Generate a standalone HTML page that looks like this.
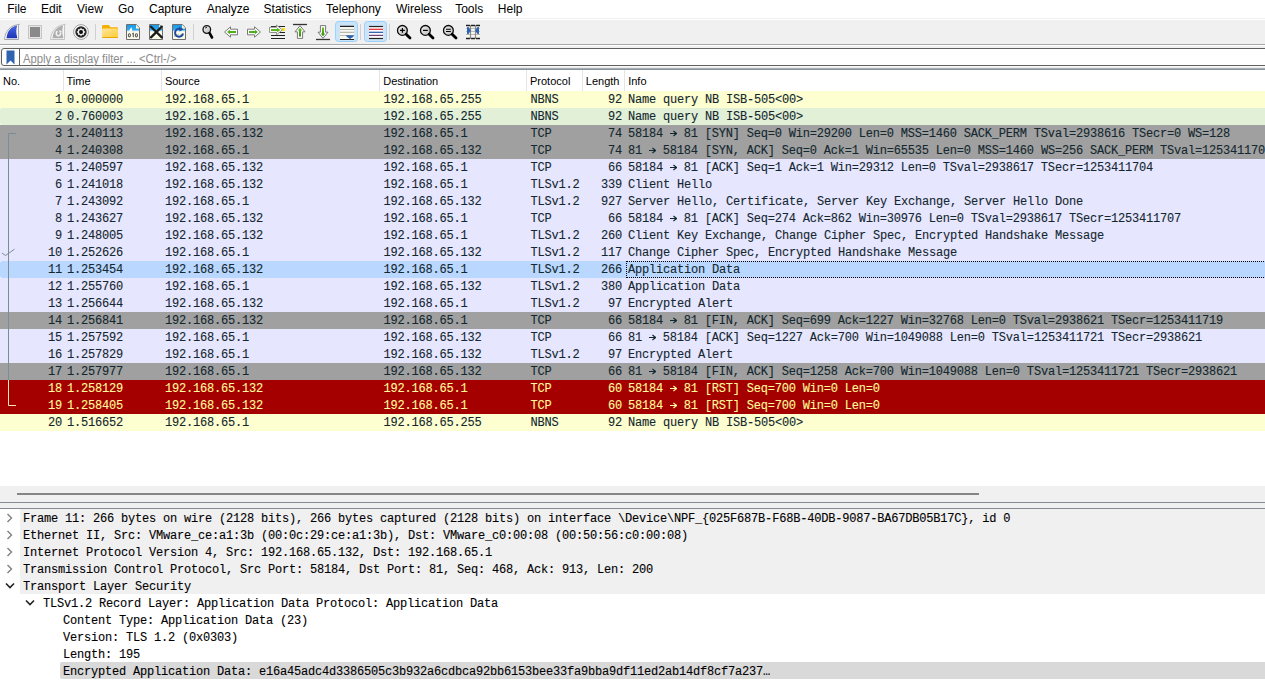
<!DOCTYPE html><html><head><meta charset="utf-8"><style>
*{margin:0;padding:0;box-sizing:border-box}
html,body{width:1265px;height:689px;overflow:hidden;background:#fff}
body{position:relative;font-family:"Liberation Sans",sans-serif;font-size:12px;color:#000}
.a{position:absolute}
.menu span{position:absolute;top:2px;white-space:pre;font-size:12px;color:#000}
.mono{font-family:"Liberation Mono",monospace;font-size:12px;letter-spacing:-0.2px;white-space:pre;-webkit-text-stroke:0.1px currentColor}
.row{position:absolute;left:0;width:1265px;height:17px;color:#12272e}
.row span{position:absolute;top:2px;line-height:14px}
.nb{background:#feffd0}
.hov{background:#e3f0d8;border-radius:2px 0 0 2px}
.tcp{background:#e7e6ff}
.syn{background:#a0a0a0}
.rst{background:#a40000;color:#fffc9c}
.sel{background:#b9d7ff;border-radius:2px 0 0 2px}
.hdr span{position:absolute;top:75px;font-size:11px;color:#000;white-space:pre;transform-origin:0 0}
.sep{position:absolute;top:70px;width:1px;height:21px;background:#e5e5e5}
.drow{position:absolute;height:17px;color:#000}
.drow span{position:absolute;top:3px;line-height:14px}
</style></head><body>
<div class="menu">
<span style="left:7.2px">File</span>
<span style="left:41.0px">Edit</span>
<span style="left:77.0px">View</span>
<span style="left:117.9px">Go</span>
<span style="left:149.0px">Capture</span>
<span style="left:206.7px">Analyze</span>
<span style="left:263.6px">Statistics</span>
<span style="left:326.1px">Telephony</span>
<span style="left:396.0px">Wireless</span>
<span style="left:455.2px">Tools</span>
<span style="left:497.8px">Help</span>
</div>
<div class="a" style="left:0;top:18px;width:1265px;height:1px;background:#f0f0f0"></div>
<div class="a" style="left:0;top:19px;width:1265px;height:1px;background:#fff"></div>
<div class="a" style="left:0;top:20px;width:1265px;height:24px;background:#f0f0f0"></div>
<div class="a" style="left:0;top:44px;width:1265px;height:1px;background:#a8a8a8"></div>
<div class="a" style="left:0;top:45px;width:1265px;height:1px;background:#fff"></div>
<div class="a" style="left:0;top:46px;width:1265px;height:21px;background:#f0f0f0"></div>
<svg class="a" style="left:0;top:0" width="500" height="45" viewBox="0 0 500 45">
<defs>
<linearGradient id="gfin" x1="0" y1="0" x2="0" y2="1"><stop offset="0" stop-color="#4a68e0"/><stop offset="1" stop-color="#1c35b8"/></linearGradient>
<linearGradient id="gfold" x1="0" y1="0" x2="1" y2="1"><stop offset="0" stop-color="#ffe59a"/><stop offset="1" stop-color="#ffcd38"/></linearGradient>
<linearGradient id="gdoc" x1="0" y1="0" x2="0" y2="1"><stop offset="0" stop-color="#1a9ae8"/><stop offset="0.7" stop-color="#2ea8ee"/><stop offset="1" stop-color="#b8e0fa"/></linearGradient>
<linearGradient id="ggrn" x1="0" y1="0" x2="0" y2="1"><stop offset="0" stop-color="#6cc520"/><stop offset="1" stop-color="#2f8f0c"/></linearGradient>
<linearGradient id="glens" x1="0" y1="0" x2="1" y2="1"><stop offset="0" stop-color="#f0f0f0"/><stop offset="1" stop-color="#bdbdbd"/></linearGradient>
<g id="doc">
<path d="M126.5 24.5H136.2L139.5 27.8V39.5H126.5Z" fill="#fbfbe9" stroke="#6e6e6e"/>
<path d="M127 25H136V28.5H139V31.3H127Z" fill="url(#gdoc)"/>
<path d="M136.4 25.2V28.2H139.3Z" fill="#f7ecd8"/>
</g>
</defs>
<!-- shark fin -->
<path d="M4.5 39.5C5.2 31 10 25.5 19.5 24.3L18.5 25.2V39.5Z" fill="#fafafa" stroke="#a8a8a8"/>
<path d="M6.5 38.2C7.4 30.6 11 26.8 17.2 25.6C16 29.5 16 33.5 17.2 37.2V38.2Z" fill="url(#gfin)"/>
<!-- stop -->
<rect x="28.5" y="25.5" width="13" height="13" fill="#e6e6e6" stroke="#c6c6c6"/>
<rect x="30" y="27" width="10" height="10" fill="#8a8a8a"/>
<!-- restart fin (disabled) -->
<path d="M50.5 39.5C51.2 31 56 25.5 65.5 24.3L64.5 25.2V39.5Z" fill="#f6f6f6" stroke="#c4c4c4"/>
<path d="M52.5 38.2C53.4 30.6 57 26.8 63.2 25.6C62 29.5 62 33.5 63.2 37.2V38.2Z" fill="#aeaeae"/>
<path d="M57.5 31.3C56 32 55.6 34.5 57.5 35.6C59.3 36.4 61 34.8 60.6 32.6" fill="none" stroke="#f4f4f4" stroke-width="1.5"/>
<path d="M59 30.2L61.8 31L60 33.3Z" fill="#f4f4f4"/>
<!-- options gear -->
<circle cx="81" cy="32" r="7.4" fill="#fbfbfb" stroke="#a0a0a0" stroke-width="1"/>
<circle cx="81" cy="32" r="5.7" fill="#262626"/>
<path d="M81 27.6L82 29.2L83.8 28.9L83.9 30.7L85.4 32L83.9 33.3L83.8 35.1L82 34.8L81 36.4L80 34.8L78.2 35.1L78.1 33.3L76.6 32L78.1 30.7L78.2 28.9L80 29.2Z" fill="#f2f2f2"/>
<circle cx="81" cy="32" r="2" fill="#0c0c0c"/>
<!-- separators -->
<rect x="95" y="24" width="1" height="16" fill="#d0d0d0"/>
<rect x="193" y="24" width="1" height="16" fill="#d0d0d0"/>
<rect x="360" y="24" width="1" height="16" fill="#d0d0d0"/>
<rect x="389" y="24" width="1" height="16" fill="#d0d0d0"/>
<!-- folder -->
<path d="M102 26.2Q102 25 103.2 25H108.8L110.6 27.2H116.8Q118 27.2 118 28.4V36.8Q118 38 116.8 38H103.2Q102 38 102 36.8Z" fill="#f2b000"/>
<path d="M102 29.4Q102 28.6 103 28.6H117Q118 28.6 118 29.4V36.6Q118 37.4 117 37.4H103Q102 37.4 102 36.6Z" fill="url(#gfold)"/>
<rect x="102.5" y="37" width="15" height="1" fill="#e8a400"/>
<!-- save -->
<use href="#doc"/>
<path d="M129 31.3Q130 28.3 131.9 27.3V31.3Z" fill="#fff"/>
<g fill="none" stroke="#5a5a5a" stroke-width="1.1"><ellipse cx="129.4" cy="35.3" rx="1.1" ry="1.6"/><path d="M132.2 34L133.3 33.4V37.3"/><ellipse cx="136.4" cy="35.3" rx="1.1" ry="1.6"/></g>
<!-- close -->
<use href="#doc" x="23"/>
<path d="M151 26.8L161.8 37.4M161.8 26.6L151 37.4" stroke="#1c1c1c" stroke-width="2.3" stroke-linecap="round"/>
<!-- reload -->
<use href="#doc" x="46"/>
<g fill="none" stroke="#555" stroke-width="0.8" opacity="0.6"><path d="M175 34V37M178 34V37M181 34V37"/></g>
<path d="M183 33.5A4 4 0 1 1 180.5 29" fill="none" stroke="#1f4c9e" stroke-width="2"/>
<path d="M179 26.5L183.5 29.2L179.5 31.5Z" fill="#1f4c9e"/>
<!-- find -->
<circle cx="206.8" cy="29.5" r="3.8" fill="url(#glens)" stroke="#111" stroke-width="1.3"/>
<path d="M205 28.3Q205.8 27.3 207 27.3" stroke="#111" stroke-width="0.9" fill="none"/>
<path d="M209.6 33.2L212 37.5" stroke="#000" stroke-width="2.6" stroke-linecap="round"/>
<!-- back -->
<path d="M224.5 32L230.5 26.8V29.2H237.5V34.8H230.5V37.2Z" fill="#fff" stroke="#7a7a7a" stroke-linejoin="round"/>
<path d="M227 32L230 29.7V31H236V33H230V34.3Z" fill="#4fb01c"/>
<!-- forward -->
<path d="M260.5 32L254.5 26.8V29.2H247.5V34.8H254.5V37.2Z" fill="#fff" stroke="#7a7a7a" stroke-linejoin="round"/>
<path d="M258 32L255 29.7V31H249V33H255V34.3Z" fill="#4fb01c"/>
<!-- go to packet -->
<g stroke="#222" stroke-width="1.2"><path d="M271 26.5H285M271 32.5H285M271 35.5H285M271 38.5H285"/></g>
<rect x="282" y="28" width="3" height="3" fill="#ffe01a"/>
<path d="M269.5 27.3H276.5V25L282.3 29.9L276.5 34.8V32.4H269.5Z" fill="#fff" stroke="#888" stroke-width="0.9" stroke-linejoin="round"/>
<path d="M271 29H277V27.8L280.5 30L277 32.3V31H271Z" fill="#58b81a"/>
<!-- first packet -->
<path d="M293 24.5H307" stroke="#333" stroke-width="1.3"/>
<path d="M300 25.7L305 31.8H302.6V38.4H297.4V31.8H295Z" fill="#fff" stroke="#777" stroke-linejoin="round"/>
<path d="M300 27.8L302.3 30.6H301V36.5H299V30.6H297.7Z" fill="url(#ggrn)"/>
<!-- last packet -->
<path d="M316 39.5H330" stroke="#333" stroke-width="1.3"/>
<path d="M323 38.3L328 32.2H325.6V25.6H320.4V32.2H318Z" fill="#fff" stroke="#777" stroke-linejoin="round"/>
<path d="M323 36.2L325.3 33.4H324V27.5H322V33.4H320.7Z" fill="url(#ggrn)"/>
<!-- autoscroll (checked) -->
<rect x="335.5" y="21.5" width="22" height="20" rx="3" fill="#cce4f7" stroke="#99d1ff"/>
<rect x="340" y="26.5" width="14" height="13" fill="#f7f7f3"/>
<g stroke-width="1.2"><path d="M340 26.4H354M340 39.5H354" stroke="#222"/><path d="M340 29.5H354M340 32.4H354M340 35.5H354" stroke="#b8b8ac"/></g>
<path d="M346 35.3H354Q353.5 38 350.5 38.6L350 39.8L349.5 38.6Q346.5 38 346 35.3Z" fill="#2c62b2"/>
<!-- colorize (checked) -->
<rect x="364.5" y="21.5" width="22" height="20" rx="3" fill="#cce4f7" stroke="#99d1ff"/>
<rect x="369" y="26" width="14" height="13" fill="#fbfbfb"/>
<g stroke-width="1.2"><path d="M369 26.5H383" stroke="#222"/><path d="M369 29.3H383" stroke="#e8262b"/><path d="M369 32.3H383" stroke="#2452a4"/><path d="M369 35.4H383" stroke="#6f3f72"/><path d="M369 38.5H383" stroke="#222"/></g>
<!-- zoom in/out/normal -->
<g id="zm">
<circle cx="402.4" cy="30.4" r="4.9" fill="url(#glens)" stroke="#0a0a0a" stroke-width="1.3"/>
<path d="M406.2 34.2L410 38" stroke="#000" stroke-width="2.8" stroke-linecap="round"/>
</g>
<path d="M400 30.4H404.8M402.4 28V32.8" stroke="#000" stroke-width="1.2"/>
<use href="#zm" x="23"/>
<path d="M423 30.4H427.8" stroke="#000" stroke-width="1.2"/>
<use href="#zm" x="46"/>
<path d="M446 29.3H450.8M446 31.5H450.8" stroke="#000" stroke-width="1.1"/>
<!-- resize columns -->
<rect x="466" y="26" width="14" height="12" fill="#f8f8f6"/>
<g stroke="#b0b0a4" stroke-width="0.9"><path d="M466 28.4H480M466 31.4H480M466 34.5H480"/></g>
<g stroke="#1e1e1e" stroke-width="1.3"><path d="M466 25.5H470M471 25.5H475M476 25.5H480M466 38.5H470M471 38.5H475M476 38.5H480"/></g>
<path d="M470.5 25V39M475.5 25V39" stroke="#8c8c80" stroke-width="1.2"/>
<path d="M467 27.2Q467.5 26.8 468.5 27L471 30.5L468.5 34Q467.5 34.3 467 33.8Z" fill="#2e66b5"/>
<path d="M479 27.2Q478.5 26.8 477.5 27L475 30.5L477.5 34Q478.5 34.3 479 33.8Z" fill="#2e66b5"/>
</svg>

<div class="a" style="left:1px;top:48px;width:1280px;height:18px;background:#fff;border:1px solid #5f5f5f;border-radius:3px"></div>
<div class="a" style="left:19px;top:49px;width:1px;height:16px;background:#5f5f5f"></div>
<svg class="a" style="left:6px;top:50px" width="9" height="15"><path d="M0.5 0.5h8v14l-4-4l-4 4z" fill="#2f63b0"/></svg>
<span class="a" style="left:22.5px;top:52px;color:#8c8c8c;white-space:pre;transform:scaleX(0.94);transform-origin:0 0">Apply a display filter ... &lt;Ctrl-/&gt;</span>
<div class="a" style="left:0;top:66px;width:1265px;height:1px;background:#fafafa"></div>
<div class="a" style="left:0;top:67px;width:1265px;height:1px;background:#e8e8e8"></div>
<div class="a" style="left:0;top:68px;width:1265px;height:1px;background:#aab0b8"></div>
<div class="a" style="left:0;top:69px;width:1265px;height:1px;background:#8a929c"></div>
<div class="hdr">
<span style="left:3.0px">No.</span>
<span style="left:66.5px">Time</span>
<span style="left:164.9px">Source</span>
<span style="left:383.2px">Destination</span>
<span style="left:530.0px">Protocol</span>
<span style="left:585.8px">Length</span>
<span style="left:628.2px">Info</span>
</div>
<div class="sep" style="left:63px"></div>
<div class="sep" style="left:161px"></div>
<div class="sep" style="left:379px"></div>
<div class="sep" style="left:526px"></div>
<div class="sep" style="left:582px"></div>
<div class="sep" style="left:624px"></div>
<div class="row mono nb" style="top:91px">
<span style="right:1203px">1</span>
<span style="left:67px">0.000000</span>
<span style="left:165px">192.168.65.1</span>
<span style="left:383.5px">192.168.65.255</span>
<span style="left:530.5px">NBNS</span>
<span style="right:643px">92</span>
<span style="left:628px">Name query NB ISB-505&lt;00&gt;</span>
</div>
<div class="row mono hov" style="top:108px">
<span style="right:1203px">2</span>
<span style="left:67px">0.760003</span>
<span style="left:165px">192.168.65.1</span>
<span style="left:383.5px">192.168.65.255</span>
<span style="left:530.5px">NBNS</span>
<span style="right:643px">92</span>
<span style="left:628px">Name query NB ISB-505&lt;00&gt;</span>
</div>
<div class="row mono syn" style="top:125px">
<span style="right:1203px">3</span>
<span style="left:67px">1.240113</span>
<span style="left:165px">192.168.65.132</span>
<span style="left:383.5px">192.168.65.1</span>
<span style="left:530.5px">TCP</span>
<span style="right:643px">74</span>
<span style="left:628px">58184 <svg width="6.8" height="14" style="vertical-align:top"><path d="M0 6.5H6.6M3.4 4L6.6 6.5L3.4 9" stroke="currentColor" stroke-width="1.1" fill="none"/></svg> 81 [SYN] Seq=0 Win=29200 Len=0 MSS=1460 SACK_PERM TSval=2938616 TSecr=0 WS=128</span>
</div>
<div class="row mono syn" style="top:142px">
<span style="right:1203px">4</span>
<span style="left:67px">1.240308</span>
<span style="left:165px">192.168.65.1</span>
<span style="left:383.5px">192.168.65.132</span>
<span style="left:530.5px">TCP</span>
<span style="right:643px">74</span>
<span style="left:628px">81 <svg width="6.8" height="14" style="vertical-align:top"><path d="M0 6.5H6.6M3.4 4L6.6 6.5L3.4 9" stroke="currentColor" stroke-width="1.1" fill="none"/></svg> 58184 [SYN, ACK] Seq=0 Ack=1 Win=65535 Len=0 MSS=1460 WS=256 SACK_PERM TSval=1253411704 TSecr=2938616</span>
</div>
<div class="row mono tcp" style="top:159px">
<span style="right:1203px">5</span>
<span style="left:67px">1.240597</span>
<span style="left:165px">192.168.65.132</span>
<span style="left:383.5px">192.168.65.1</span>
<span style="left:530.5px">TCP</span>
<span style="right:643px">66</span>
<span style="left:628px">58184 <svg width="6.8" height="14" style="vertical-align:top"><path d="M0 6.5H6.6M3.4 4L6.6 6.5L3.4 9" stroke="currentColor" stroke-width="1.1" fill="none"/></svg> 81 [ACK] Seq=1 Ack=1 Win=29312 Len=0 TSval=2938617 TSecr=1253411704</span>
</div>
<div class="row mono tcp" style="top:176px">
<span style="right:1203px">6</span>
<span style="left:67px">1.241018</span>
<span style="left:165px">192.168.65.132</span>
<span style="left:383.5px">192.168.65.1</span>
<span style="left:530.5px">TLSv1.2</span>
<span style="right:643px">339</span>
<span style="left:628px">Client Hello</span>
</div>
<div class="row mono tcp" style="top:193px">
<span style="right:1203px">7</span>
<span style="left:67px">1.243092</span>
<span style="left:165px">192.168.65.1</span>
<span style="left:383.5px">192.168.65.132</span>
<span style="left:530.5px">TLSv1.2</span>
<span style="right:643px">927</span>
<span style="left:628px">Server Hello, Certificate, Server Key Exchange, Server Hello Done</span>
</div>
<div class="row mono tcp" style="top:210px">
<span style="right:1203px">8</span>
<span style="left:67px">1.243627</span>
<span style="left:165px">192.168.65.132</span>
<span style="left:383.5px">192.168.65.1</span>
<span style="left:530.5px">TCP</span>
<span style="right:643px">66</span>
<span style="left:628px">58184 <svg width="6.8" height="14" style="vertical-align:top"><path d="M0 6.5H6.6M3.4 4L6.6 6.5L3.4 9" stroke="currentColor" stroke-width="1.1" fill="none"/></svg> 81 [ACK] Seq=274 Ack=862 Win=30976 Len=0 TSval=2938617 TSecr=1253411707</span>
</div>
<div class="row mono tcp" style="top:227px">
<span style="right:1203px">9</span>
<span style="left:67px">1.248005</span>
<span style="left:165px">192.168.65.132</span>
<span style="left:383.5px">192.168.65.1</span>
<span style="left:530.5px">TLSv1.2</span>
<span style="right:643px">260</span>
<span style="left:628px">Client Key Exchange, Change Cipher Spec, Encrypted Handshake Message</span>
</div>
<div class="row mono tcp" style="top:244px">
<span style="right:1203px">10</span>
<span style="left:67px">1.252626</span>
<span style="left:165px">192.168.65.1</span>
<span style="left:383.5px">192.168.65.132</span>
<span style="left:530.5px">TLSv1.2</span>
<span style="right:643px">117</span>
<span style="left:628px">Change Cipher Spec, Encrypted Handshake Message</span>
</div>
<div class="row mono sel" style="top:261px">
<span style="right:1203px">11</span>
<span style="left:67px">1.253454</span>
<span style="left:165px">192.168.65.132</span>
<span style="left:383.5px">192.168.65.1</span>
<span style="left:530.5px">TLSv1.2</span>
<span style="right:643px">266</span>
<span style="left:628px">Application Data</span>
</div>
<div class="row mono tcp" style="top:278px">
<span style="right:1203px">12</span>
<span style="left:67px">1.255760</span>
<span style="left:165px">192.168.65.1</span>
<span style="left:383.5px">192.168.65.132</span>
<span style="left:530.5px">TLSv1.2</span>
<span style="right:643px">380</span>
<span style="left:628px">Application Data</span>
</div>
<div class="row mono tcp" style="top:295px">
<span style="right:1203px">13</span>
<span style="left:67px">1.256644</span>
<span style="left:165px">192.168.65.132</span>
<span style="left:383.5px">192.168.65.1</span>
<span style="left:530.5px">TLSv1.2</span>
<span style="right:643px">97</span>
<span style="left:628px">Encrypted Alert</span>
</div>
<div class="row mono syn" style="top:312px">
<span style="right:1203px">14</span>
<span style="left:67px">1.256841</span>
<span style="left:165px">192.168.65.132</span>
<span style="left:383.5px">192.168.65.1</span>
<span style="left:530.5px">TCP</span>
<span style="right:643px">66</span>
<span style="left:628px">58184 <svg width="6.8" height="14" style="vertical-align:top"><path d="M0 6.5H6.6M3.4 4L6.6 6.5L3.4 9" stroke="currentColor" stroke-width="1.1" fill="none"/></svg> 81 [FIN, ACK] Seq=699 Ack=1227 Win=32768 Len=0 TSval=2938621 TSecr=1253411719</span>
</div>
<div class="row mono tcp" style="top:329px">
<span style="right:1203px">15</span>
<span style="left:67px">1.257592</span>
<span style="left:165px">192.168.65.1</span>
<span style="left:383.5px">192.168.65.132</span>
<span style="left:530.5px">TCP</span>
<span style="right:643px">66</span>
<span style="left:628px">81 <svg width="6.8" height="14" style="vertical-align:top"><path d="M0 6.5H6.6M3.4 4L6.6 6.5L3.4 9" stroke="currentColor" stroke-width="1.1" fill="none"/></svg> 58184 [ACK] Seq=1227 Ack=700 Win=1049088 Len=0 TSval=1253411721 TSecr=2938621</span>
</div>
<div class="row mono tcp" style="top:346px">
<span style="right:1203px">16</span>
<span style="left:67px">1.257829</span>
<span style="left:165px">192.168.65.1</span>
<span style="left:383.5px">192.168.65.132</span>
<span style="left:530.5px">TLSv1.2</span>
<span style="right:643px">97</span>
<span style="left:628px">Encrypted Alert</span>
</div>
<div class="row mono syn" style="top:363px">
<span style="right:1203px">17</span>
<span style="left:67px">1.257977</span>
<span style="left:165px">192.168.65.1</span>
<span style="left:383.5px">192.168.65.132</span>
<span style="left:530.5px">TCP</span>
<span style="right:643px">66</span>
<span style="left:628px">81 <svg width="6.8" height="14" style="vertical-align:top"><path d="M0 6.5H6.6M3.4 4L6.6 6.5L3.4 9" stroke="currentColor" stroke-width="1.1" fill="none"/></svg> 58184 [FIN, ACK] Seq=1258 Ack=700 Win=1049088 Len=0 TSval=1253411721 TSecr=2938621</span>
</div>
<div class="row mono rst" style="top:380px">
<span style="right:1203px">18</span>
<span style="left:67px">1.258129</span>
<span style="left:165px">192.168.65.132</span>
<span style="left:383.5px">192.168.65.1</span>
<span style="left:530.5px">TCP</span>
<span style="right:643px">60</span>
<span style="left:628px">58184 <svg width="6.8" height="14" style="vertical-align:top"><path d="M0 6.5H6.6M3.4 4L6.6 6.5L3.4 9" stroke="currentColor" stroke-width="1.1" fill="none"/></svg> 81 [RST] Seq=700 Win=0 Len=0</span>
</div>
<div class="row mono rst" style="top:397px">
<span style="right:1203px">19</span>
<span style="left:67px">1.258405</span>
<span style="left:165px">192.168.65.132</span>
<span style="left:383.5px">192.168.65.1</span>
<span style="left:530.5px">TCP</span>
<span style="right:643px">60</span>
<span style="left:628px">58184 <svg width="6.8" height="14" style="vertical-align:top"><path d="M0 6.5H6.6M3.4 4L6.6 6.5L3.4 9" stroke="currentColor" stroke-width="1.1" fill="none"/></svg> 81 [RST] Seq=700 Win=0 Len=0</span>
</div>
<div class="row mono nb" style="top:414px">
<span style="right:1203px">20</span>
<span style="left:67px">1.516652</span>
<span style="left:165px">192.168.65.1</span>
<span style="left:383.5px">192.168.65.255</span>
<span style="left:530.5px">NBNS</span>
<span style="right:643px">92</span>
<span style="left:628px">Name query NB ISB-505&lt;00&gt;</span>
</div>
<div class="a" style="left:626px;top:261px;width:700px;height:17px;border:1px dotted #000"></div>
<svg class="a" style="left:0;top:0" width="30" height="420"><g fill="none" stroke="#7c8c94" stroke-width="1"><path d="M8.5 133.5H16M8.5 133.5V380"/></g><path d="M8.5 380V405.5H16" fill="none" stroke="#ffe8b0"/><path d="M2 253l3.5 2.5l9-6.3" fill="none" stroke="#7c8c94" stroke-width="1"/></svg>
<div class="a" style="left:0;top:486px;width:1265px;height:23px;background:#f0f0f0"></div>
<div class="a" style="left:17px;top:493px;width:962px;height:2px;background:#858585"></div>
<div class="a" style="left:0;top:502px;width:1265px;height:1px;background:#868a94"></div>
<div class="a" style="left:0;top:508px;width:1265px;height:1px;background:#868a94"></div>
<div class="a" style="left:0;top:509px;width:1265px;height:180px;background:#fff"></div>
<div class="a" style="left:20px;top:509px;width:1245px;height:85px;background:#f0f0f0"></div>
<div class="a" style="left:60px;top:662px;width:1210px;height:17px;background:#d9d9d9;border-radius:2px"></div>
<div class="drow mono" style="left:0;top:509px;width:1265px"><span style="left:23px">Frame 11: 266 bytes on wire (2128 bits), 266 bytes captured (2128 bits) on interface \Device\NPF_{025F687B-F68B-40DB-9087-BA67DB05B17C}, id 0</span></div>
<svg class="a" style="left:6px;top:512.5px" width="8" height="10"><path d="M1.5 1l4 4l-4 4" fill="none" stroke="#808080" stroke-width="1.4"/></svg>
<div class="drow mono" style="left:0;top:526px;width:1265px"><span style="left:23px">Ethernet II, Src: VMware_ce:a1:3b (00:0c:29:ce:a1:3b), Dst: VMware_c0:00:08 (00:50:56:c0:00:08)</span></div>
<svg class="a" style="left:6px;top:529.5px" width="8" height="10"><path d="M1.5 1l4 4l-4 4" fill="none" stroke="#808080" stroke-width="1.4"/></svg>
<div class="drow mono" style="left:0;top:543px;width:1265px"><span style="left:23px">Internet Protocol Version 4, Src: 192.168.65.132, Dst: 192.168.65.1</span></div>
<svg class="a" style="left:6px;top:546.5px" width="8" height="10"><path d="M1.5 1l4 4l-4 4" fill="none" stroke="#808080" stroke-width="1.4"/></svg>
<div class="drow mono" style="left:0;top:560px;width:1265px"><span style="left:23px">Transmission Control Protocol, Src Port: 58184, Dst Port: 81, Seq: 468, Ack: 913, Len: 200</span></div>
<svg class="a" style="left:6px;top:563.5px" width="8" height="10"><path d="M1.5 1l4 4l-4 4" fill="none" stroke="#808080" stroke-width="1.4"/></svg>
<div class="drow mono" style="left:0;top:577px;width:1265px"><span style="left:23px">Transport Layer Security</span></div>
<svg class="a" style="left:5px;top:582px" width="11" height="8"><path d="M1 1.5l4 4l4-4" fill="none" stroke="#222" stroke-width="1.6"/></svg>
<div class="drow mono" style="left:0;top:594px;width:1265px"><span style="left:43px">TLSv1.2 Record Layer: Application Data Protocol: Application Data</span></div>
<svg class="a" style="left:25px;top:599px" width="11" height="8"><path d="M1 1.5l4 4l4-4" fill="none" stroke="#222" stroke-width="1.6"/></svg>
<div class="drow mono" style="left:0;top:611px;width:1265px"><span style="left:63px">Content Type: Application Data (23)</span></div>
<div class="drow mono" style="left:0;top:628px;width:1265px"><span style="left:63px">Version: TLS 1.2 (0x0303)</span></div>
<div class="drow mono" style="left:0;top:645px;width:1265px"><span style="left:63px">Length: 195</span></div>
<div class="drow mono" style="left:0;top:662px;width:1265px"><span style="left:63px">Encrypted Application Data: e16a45adc4d3386505c3b932a6cdbca92bb6153bee33fa9bba9df11ed2ab14df8cf7a237…</span></div>
</body></html>
